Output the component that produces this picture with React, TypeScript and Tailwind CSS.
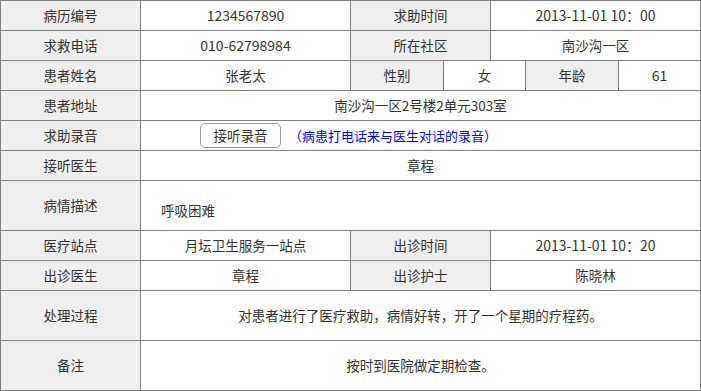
import React from 'react';

type CellProps = {
  children?: React.ReactNode;
  head?: boolean;
  span?: string;
  className?: string;
};

const Cell: React.FC<CellProps> = ({ children, head, span = '', className = '' }) => (
  <div
    className={`flex items-center justify-center ${span} ${
      head ? 'bg-[#efefef]' : 'bg-white'
    } ${className}`}
  >
    {children}
  </div>
);

const App: React.FC = () => {
  return (
    <div
      className="w-[701px] h-[391px] bg-white text-[13.5px] text-[#333]"
      style={{ fontFamily: '"Noto Sans CJK SC", "Noto Sans", sans-serif' }}
    >
      <div className="grid grid-cols-[139px_209px_92px_46px_34px_92px_81px] grid-rows-[29px_29px_29px_29px_29px_29px_49px_29px_29px_49px_49px] gap-px bg-[#7f7f7f] p-px w-[701px]">
        {/* row 1 */}
        <Cell head>病历编号</Cell>
        <Cell className="text-[14px]">1234567890</Cell>
        <Cell head span="col-span-2">求助时间</Cell>
        <Cell span="col-span-3" className="text-[14px]">2013-11-01 10：00</Cell>

        {/* row 2 */}
        <Cell head>求救电话</Cell>
        <Cell className="text-[14px]">010-62798984</Cell>
        <Cell head span="col-span-2">所在社区</Cell>
        <Cell span="col-span-3">南沙沟一区</Cell>

        {/* row 3 */}
        <Cell head>患者姓名</Cell>
        <Cell>张老太</Cell>
        <Cell head>性别</Cell>
        <Cell span="col-span-2">女</Cell>
        <Cell head>年龄</Cell>
        <Cell className="text-[14px]">61</Cell>

        {/* row 4 */}
        <Cell head>患者地址</Cell>
        <Cell span="col-span-6">南沙沟一区2号楼2单元303室</Cell>

        {/* row 5 */}
        <Cell head>求助录音</Cell>
        <Cell span="col-span-6" className="!justify-start pl-[59px]">
          <button className="w-[81px] h-[25px] border border-[#999] rounded-[5px] bg-white text-[13.5px] text-[#333] leading-none">
            接听录音
          </button>
          <span className="ml-[8px] text-[13px] text-[#0000ff]">（病患打电话来与医生对话的录音）</span>
        </Cell>

        {/* row 6 */}
        <Cell head>接听医生</Cell>
        <Cell span="col-span-6">章程</Cell>

        {/* row 7 */}
        <Cell head>病情描述</Cell>
        <Cell span="col-span-6" className="!justify-start pl-[20px] pt-[9px]">
          呼吸困难
        </Cell>

        {/* row 8 */}
        <Cell head>医疗站点</Cell>
        <Cell>月坛卫生服务一站点</Cell>
        <Cell head span="col-span-2">出诊时间</Cell>
        <Cell span="col-span-3" className="text-[14px]">2013-11-01 10：20</Cell>

        {/* row 9 */}
        <Cell head>出诊医生</Cell>
        <Cell>章程</Cell>
        <Cell head span="col-span-2">出诊护士</Cell>
        <Cell span="col-span-3">陈晓林</Cell>

        {/* row 10 */}
        <Cell head>处理过程</Cell>
        <Cell span="col-span-6">对患者进行了医疗救助，病情好转，开了一个星期的疗程药。</Cell>

        {/* row 11 */}
        <Cell head>备注</Cell>
        <Cell span="col-span-6">按时到医院做定期检查。</Cell>
      </div>
    </div>
  );
};

export default App;
